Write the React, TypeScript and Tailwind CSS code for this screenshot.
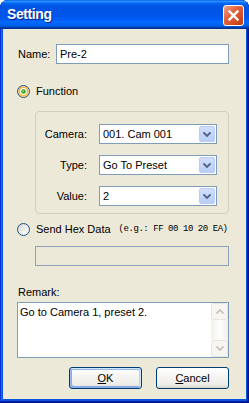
import React from 'react';

function Radio({ checked }: { checked?: boolean }) {
    return (
        <svg width="13" height="13" viewBox="0 0 13 13" className="shrink-0">
            <defs>
                <linearGradient id={checked ? 'rfill1' : 'rfill0'} x1="0" y1="0" x2="1" y2="1">
                    <stop offset="0" stopColor="#D6D6D0" />
                    <stop offset="1" stopColor="#FFFFFF" />
                </linearGradient>
            </defs>
            <circle cx="6.5" cy="6.5" r="6" fill={`url(#${checked ? 'rfill1' : 'rfill0'})`} stroke="#1C5180" strokeWidth="1" />
            {checked && (
                <>
                    <circle cx="6.5" cy="6.5" r="4.3" fill="#FFFFFF" stroke="#F6B63E" strokeWidth="1.8" />
                    <circle cx="6.5" cy="6.5" r="2.3" fill="#2BA32B" />
                    <circle cx="6.2" cy="6.2" r="0.9" fill="#7FD67F" />
                </>
            )}
        </svg>
    );
}

function Chevron({ up, color }: { up?: boolean; color: string }) {
    return (
        <svg width="8" height="5" viewBox="0 0 8 5">
            <path
                d={up ? 'M1 4 L4 1 L7 4' : 'M1 1 L4 4 L7 1'}
                fill="none"
                stroke={color}
                strokeWidth="1.8"
                strokeLinecap="square"
            />
        </svg>
    );
}

function Combo({ value }: { value: string }) {
    return (
        <div className="flex h-[20px] w-[118px] items-stretch border border-[#7F9DB9] bg-white p-px">
            <div className="flex flex-1 items-center pl-[2px] leading-none">{value}</div>
            <div className="flex w-[16px] items-center justify-center rounded-[2px] border border-[#B7CCF7] bg-[linear-gradient(to_bottom,#D1DEFB,#B9CDF8)]">
                <Chevron color="#4D6185" />
            </div>
        </div>
    );
}

function XpButton({ label, focused }: { label: React.ReactNode; focused?: boolean }) {
    return (
        <button
            type="button"
            className={
                focused
                    ? 'flex h-[22px] w-[73px] items-center justify-center rounded-[3px] border border-[#003C74] bg-[linear-gradient(to_bottom,#FFFFFF,#ECEBE6_86%,#D6D0C5)] text-black shadow-[inset_-1px_1px_#CEE7FF,inset_1px_2px_#98B8EA,inset_-2px_2px_#BCD4F6,inset_1px_-1px_#89ADE4,inset_2px_-2px_#89ADE4]'
                    : 'flex h-[22px] w-[73px] items-center justify-center rounded-[3px] border border-[#003C74] bg-[linear-gradient(to_bottom,#FFFFFF,#ECEBE6_86%,#D6D0C5)] text-black'
            }
        >
            {label}
        </button>
    );
}

export default function App() {
    return (
        <div className="h-[403px] w-[249px] bg-white font-['Liberation_Sans',Arial,sans-serif] text-[11px] text-black">
            <div className="flex h-full flex-col overflow-hidden rounded-t-[8px] bg-[#0855DD] shadow-[inset_-1px_-1px_#00138C,inset_1px_1px_#0831D9,inset_-2px_-2px_#001EA0,inset_2px_2px_#166AEE]">

                {/* Title bar */}
                <div className="flex h-[29px] shrink-0 items-start justify-between bg-[linear-gradient(to_bottom,#0058EE_0%,#3593FF_4%,#288EFF_6%,#127DFF_8%,#036FFC_10%,#0262EE_14%,#0057E5_20%,#0054E3_24%,#0055EB_56%,#005BF5_66%,#026AFE_76%,#0062EF_86%,#0052D6_92%,#0040AB_94%,#003092_100%)] pl-[7px] pr-[5px]">
                    <span className="mt-[6px] text-[14px] font-bold leading-[17px] tracking-[-0.4px] text-white [text-shadow:1px_1px_#0A1883]">
                        Setting
                    </span>
                    <div className="mt-[5px] flex h-[21px] w-[21px] items-center justify-center rounded-[3px] border border-white bg-[linear-gradient(135deg,#F2A288_0%,#E2643F_40%,#D24A22_75%,#B63A15_100%)]">
                        <svg width="13" height="13" viewBox="0 0 13 13">
                            <path d="M2.5 2.5 L10.5 10.5 M10.5 2.5 L2.5 10.5" stroke="#FFFFFF" strokeWidth="2.4" strokeLinecap="square" />
                        </svg>
                    </div>
                </div>

                {/* Body */}
                <div className="mx-[3px] mb-[4px] flex flex-1 flex-col bg-[#ECE9D8] pl-[14px] pr-[17px] pt-[15px]">

                    <div className="flex h-[20px] items-center">
                        <label className="w-[39px] pl-px">Name:</label>
                        <input
                            readOnly
                            defaultValue="Pre-2"
                            className="h-[20px] flex-1 border border-[#7F9DB9] bg-white px-[3px] text-[11px] outline-none"
                        />
                    </div>

                    <div className="mt-[21px] flex h-[13px] items-center gap-[6px]">
                        <Radio checked />
                        <span>Function</span>
                    </div>

                    <div className="ml-[18px] mt-[13px] flex h-[103px] flex-col gap-[11px] rounded-[4px] border border-[#D0D0BF] pt-[12px]">
                        {[
                            ['Camera:', '001. Cam 001'],
                            ['Type:', 'Go To Preset'],
                            ['Value:', '2'],
                        ].map(([label, value]) => (
                            <div key={label} className="flex h-[20px] items-center gap-[12px]">
                                <span className="w-[51px] text-right">{label}</span>
                                <Combo value={value} />
                            </div>
                        ))}
                    </div>

                    <div className="mt-[9px] flex h-[13px] items-center">
                        <Radio />
                        <span className="ml-[6px]">Send Hex Data</span>
                        <span className="ml-[8px] font-['Liberation_Mono',monospace] text-[9px] tracking-[-0.45px] text-black">
                            (e.g.: FF 00 10 20 EA)
                        </span>
                    </div>

                    <div className="ml-[18px] mt-[10px] h-[20px] border border-[#8FA3BC] bg-[#ECE9D8]" />

                    <div className="mt-[20px] h-[13px] pl-px leading-[13px]">Remark:</div>

                    <div className="mt-[3px] flex h-[56px] border border-[#7F9DB9] bg-white">
                        <div className="flex-1 pl-[2px] pt-[3px] leading-[13px]">Go to Camera 1, preset 2.</div>
                        <div className="flex w-[17px] flex-col">
                            <div className="flex h-[17px] items-center justify-center rounded-[2px] border border-[#E8E6DC] bg-[#F6F5F0]">
                                <Chevron up color="#C9C7BA" />
                            </div>
                            <div className="flex-1 bg-[linear-gradient(to_right,#F2F0E8,#FEFEFB,#F2F0E8)]" />
                            <div className="flex h-[17px] items-center justify-center rounded-[2px] border border-[#E8E6DC] bg-[#F6F5F0]">
                                <Chevron color="#C9C7BA" />
                            </div>
                        </div>
                    </div>

                    <div className="mt-[9px] flex justify-end gap-[14px]">
                        <XpButton focused label={<span><span className="underline">O</span>K</span>} />
                        <XpButton label={<span><span className="underline">C</span>ancel</span>} />
                    </div>
                </div>
            </div>
        </div>
    );
}
